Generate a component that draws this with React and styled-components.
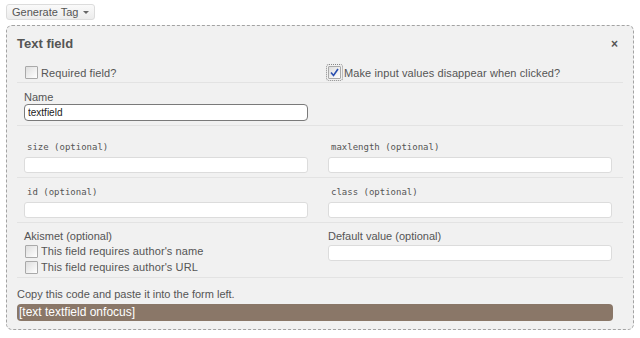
import styled, { createGlobalStyle } from 'styled-components'

const GlobalStyle = createGlobalStyle`
    body {
        margin: 0;
        background: #ffffff;
        font-family: "Liberation Sans", Arial, sans-serif;
        color: #333;
    }
`;

const Page = styled.div`
    padding: 4px 7px 0 6px;
`;

const MenuButton = styled.button`
    display: flex;
    align-items: center;
    gap: 4px;
    box-sizing: border-box;
    height: 16px;
    width: 89px;
    padding: 0 0 0 5px;
    border: 1px solid #dcdcdc;
    border-radius: 3px;
    background: linear-gradient(#fafafa, #ececec);
    font-family: "Liberation Sans", Arial, sans-serif;
    font-size: 11px;
    white-space: nowrap;
    color: #555;
    cursor: pointer;
`;

const Caret = styled.span`
    width: 0;
    height: 0;
    border-left: 3px solid transparent;
    border-right: 3px solid transparent;
    border-top: 3px solid #666;
    margin-left: 1px;
`;

const Panel = styled.div`
    margin-top: 5px;
    width: 628px;
    box-sizing: border-box;
    border: 1px dashed #a3a3a3;
    border-radius: 6px;
    background: #f1f1f1;
    padding: 10px 10px 8px 10px;
`;

const Header = styled.div`
    display: flex;
    justify-content: space-between;
    align-items: center;
    height: 16px;
`;

const Title = styled.h3`
    margin: 0;
    font-size: 13px;
    line-height: 16px;
    font-weight: bold;
    color: #555;
`;

const Close = styled.span`
    font-size: 12px;
    font-weight: bold;
    color: #555;
    margin-right: 5px;
    line-height: 16px;
`;

const Row = styled.div`
    display: grid;
    grid-template-columns: 304px 1fr;
    padding: ${p => p.$pad || '8px 0 4px 0'};
    padding-left: 7px;
    border-bottom: 1px solid #e3e3e3;
`;

const Cell = styled.div`
    display: flex;
    flex-direction: column;
`;

const Label = styled.label`
    font-size: 11px;
    line-height: 13px;
    color: #555;
    margin-bottom: ${p => p.$gap || '0px'};
`;

const Code = styled.code`
    font-family: "DejaVu Sans Mono", "Liberation Mono", monospace;
    font-size: 9px;
    line-height: 13px;
    color: #555;
    padding: 0 3px;
    margin-bottom: 3px;
`;

const TextInput = styled.input`
    box-sizing: border-box;
    width: 284px;
    height: ${p => (p.$focus ? '17px' : '16px')};
    margin: 0;
    padding: 0 3px;
    border: 1px solid ${p => (p.$focus ? '#7a7a7a' : '#dcdcdc')};
    border-radius: ${p => (p.$focus ? '4px' : '3px')};
    background: #fff;
    font-family: "Liberation Sans", Arial, sans-serif;
    font-size: 10px;
    color: #222;
    outline: none;
`;

const Check = styled.label`
    display: flex;
    align-items: center;
    gap: 3px;
    height: ${p => p.$h || '13px'};
    font-size: 11px;
    color: #555;
    letter-spacing: 0.1px;
`;

const Box = styled.span`
    box-sizing: border-box;
    width: 13px;
    height: 13px;
    border: 1px solid #a9a9a9;
    border-radius: 1px;
    background: linear-gradient(135deg, #dedede, #ffffff);
    display: flex;
    align-items: center;
    justify-content: center;
    outline: ${p => (p.$checked ? '1px dotted #888' : 'none')};
    outline-offset: 1px;
`;

const Footer = styled.div`
    padding-top: 10px;
`;

const Note = styled.p`
    margin: 0 0 3px 0;
    font-size: 11px;
    line-height: 13px;
    color: #555;
`;

const CodeBar = styled.div`
    margin-right: 10px;
    height: 17px;
    border-radius: 4px;
    background: #8a7768;
    color: #fff;
    font-size: 12px;
    line-height: 17px;
    padding-left: 2px;
`;

function CheckBox({ checked, children, h }) {
    return (
        <Check $h={h}>
            <Box $checked={checked}>
                {checked && (
                    <svg width="9" height="9" viewBox="0 0 9 9">
                        <path d="M1 4.5 L3.5 7.5 L8 1" fill="none" stroke="#2a4fb0" strokeWidth="1.6" />
                    </svg>
                )}
            </Box>
            {children}
        </Check>
    );
}

export default function App() {
    return (
        <Page>
            <GlobalStyle />
            <MenuButton type="button">Generate Tag <Caret /></MenuButton>
            <Panel>
                <Header>
                    <Title>Text field</Title>
                    <Close>×</Close>
                </Header>
                <Row $pad="14px 0 3px 0">
                    <Cell style={{ paddingLeft: 1 }}>
                        <CheckBox>Required field?</CheckBox>
                    </Cell>
                    <Cell>
                        <CheckBox checked>Make input values disappear when clicked?</CheckBox>
                    </Cell>
                </Row>
                <Row $pad="8px 0 4px 0">
                    <Cell>
                        <Label>Name</Label>
                        <TextInput $focus defaultValue="textfield" />
                    </Cell>
                </Row>
                <Row $pad="15px 0 4px 0">
                    <Cell>
                        <Code>size (optional)</Code>
                        <TextInput />
                    </Cell>
                    <Cell>
                        <Code>maxlength (optional)</Code>
                        <TextInput />
                    </Cell>
                </Row>
                <Row $pad="8px 0 4px 0">
                    <Cell>
                        <Code>id (optional)</Code>
                        <TextInput />
                    </Cell>
                    <Cell>
                        <Code>class (optional)</Code>
                        <TextInput />
                    </Cell>
                </Row>
                <Row $pad="7px 0 2px 0">
                    <Cell>
                        <Label>Akismet (optional)</Label>
                        <div style={{ paddingLeft: 1 }}>
                            <CheckBox h="16px">This field requires author's name</CheckBox>
                            <CheckBox h="16px">This field requires author's URL</CheckBox>
                        </div>
                    </Cell>
                    <Cell>
                        <Label $gap="2px">Default value (optional)</Label>
                        <TextInput />
                    </Cell>
                </Row>
                <Footer>
                    <Note>Copy this code and paste it into the form left.</Note>
                    <CodeBar>[text textfield onfocus]</CodeBar>
                </Footer>
            </Panel>
        </Page>
    );
}
